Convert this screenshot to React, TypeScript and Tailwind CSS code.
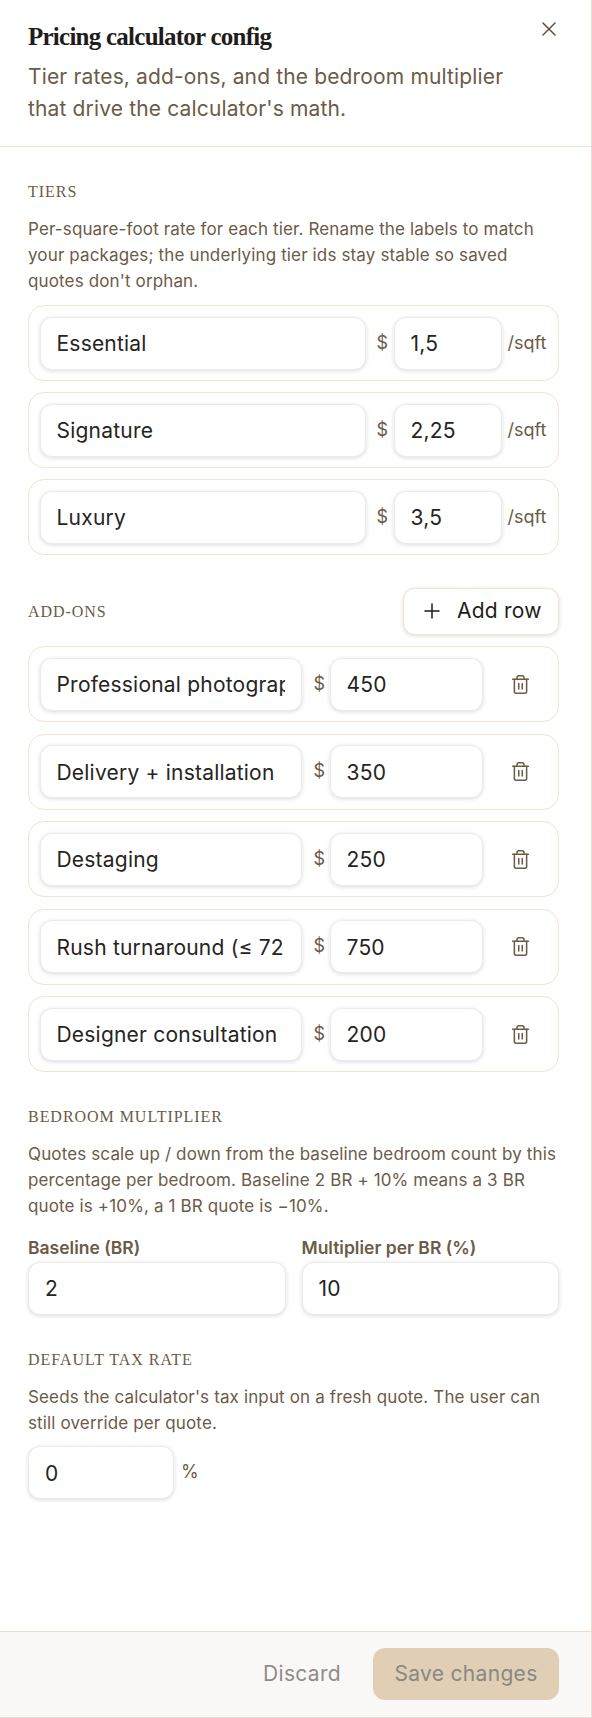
import { Plus, Trash2, X } from 'lucide-react';

const inputClass =
  'h-[53px] min-w-0 rounded-[12px] border border-[#ecebe9] bg-white px-4 pt-[1px] text-[21px] tracking-[0.01em] text-[#262422] shadow-[0_1px_4px_rgba(0,0,0,0.14)] outline-none';

const headingClass =
  "font-['Liberation_Serif',serif] text-[16px] font-normal uppercase tracking-[0.06em] text-[#6b5b47]";

const descClass = 'mt-[12px] text-[17px] leading-[26px] tracking-[0.008em] text-[#6b5b47]';

const labelClass =
  'flex flex-col text-[17.5px] font-semibold leading-[24px] text-[#6b5b47]';

const tiers = [
  { label: 'Essential', rate: '1,5' },
  { label: 'Signature', rate: '2,25' },
  { label: 'Luxury', rate: '3,5' },
];

const addons = [
  { label: 'Professional photographer', price: '450' },
  { label: 'Delivery + installation', price: '350' },
  { label: 'Destaging', price: '250' },
  { label: 'Rush turnaround (≤ 72hr)', price: '750' },
  { label: 'Designer consultation', price: '200' },
];

function TierRow({ label, rate }: { label: string; rate: string }) {
  return (
    <div className="flex items-center rounded-[16px] border border-[#f0e4d2] p-[10.5px]">
      <input readOnly value={label} className={`${inputClass} w-[326px]`} />
      <span className="ml-[11px] w-[17px] text-[18px] text-[#6b5b47] -translate-y-[1.5px]">$</span>
      <input readOnly value={rate} className={`${inputClass} w-[108px]`} />
      <span className="ml-[6px] text-[18px] text-[#6b5b47] -translate-y-[1.5px]">/sqft</span>
    </div>
  );
}

function AddonRow({ label, price }: { label: string; price: string }) {
  return (
    <div className="flex items-center rounded-[16px] border border-[#f0e4d2] p-[10.5px]">
      <input readOnly value={label} className={`${inputClass} w-[262px]`} />
      <span className="ml-[12px] w-[16px] text-[18px] text-[#6b5b47] -translate-y-[1.5px]">$</span>
      <input readOnly value={price} className={`${inputClass} w-[153px]`} />
      <button className="ml-[27px] flex items-center justify-center text-[#6b5b47]">
        <Trash2 size={21} strokeWidth={1.75} />
      </button>
    </div>
  );
}

export default function App() {
  return (
    <div className="flex h-screen w-[592px] flex-col border-r border-[#e8dfd2] bg-white font-['Inter',sans-serif]">
      {/* Header */}
      <header className="relative h-[147px] shrink-0 border-b border-[#ece4d9] pl-[28px] pr-[80px] pt-[20px]">
        <h2 className="font-['Liberation_Serif',serif] text-[25px] font-bold leading-[34px] tracking-[-0.03em] text-[#1f1d1a]">
          Pricing calculator config
        </h2>
        <p className="mt-[7px] text-[21px] leading-[32px] tracking-[0.007em] text-[#6b5b47]">
          Tier rates, add-ons, and the bedroom multiplier that drive the calculator's math.
        </p>
        <button className="absolute right-[30px] top-[17px] text-[#5c4f3f]">
          <X size={24} strokeWidth={1.5} />
        </button>
      </header>

      {/* Body */}
      <main className="min-h-0 flex-1 pl-[28px] pr-[32px] pt-[33px]">
        <section>
          <h3 className={headingClass}>Tiers</h3>
          <p className={descClass}>
            Per-square-foot rate for each tier. Rename the labels to match your packages; the
            underlying tier ids stay stable so saved quotes don't orphan.
          </p>
          <div className="mt-[11px] flex flex-col gap-[11px]">
            {tiers.map((t) => (
              <TierRow key={t.label} {...t} />
            ))}
          </div>
        </section>

        <section className="mt-[32.5px]">
          <div className="flex items-center justify-between">
            <h3 className={`${headingClass} translate-y-[1px]`}>Add-ons</h3>
            <button className="flex h-[47px] w-[156px] items-center gap-[13px] rounded-[12px] border border-[#f0e4d2] bg-white pl-[16px] text-[21px] tracking-[0.01em] text-[#1f1d1a] shadow-[0_1px_4px_rgba(0,0,0,0.14)]">
              <Plus size={24} strokeWidth={1.5} />
              Add row
            </button>
          </div>
          <div className="mt-[11.5px] flex flex-col gap-[11.5px]">
            {addons.map((a) => (
              <AddonRow key={a.label} {...a} />
            ))}
          </div>
        </section>

        <section className="mt-[32.5px]">
          <h3 className={headingClass}>Bedroom multiplier</h3>
          <p className={descClass}>
            Quotes scale up / down from the baseline bedroom count by this percentage per bedroom.
            Baseline 2 BR + 10% means a 3 BR quote is +10%, a 1 BR quote is −10%.
          </p>
          <div className="mt-[17px] grid grid-cols-2 gap-4">
            <label className={labelClass}>
              Baseline (BR)
              <input readOnly value="2" className={`${inputClass} mt-[2px] w-full font-normal`} />
            </label>
            <label className={labelClass}>
              Multiplier per BR (%)
              <input readOnly value="10" className={`${inputClass} mt-[2px] w-full font-normal`} />
            </label>
          </div>
        </section>

        <section className="mt-[33px]">
          <h3 className={headingClass}>Default tax rate</h3>
          <p className={descClass}>
            Seeds the calculator's tax input on a fresh quote. The user can still override per
            quote.
          </p>
          <div className="mt-[10.5px] flex items-center gap-[7px]">
            <input readOnly value="0" className={`${inputClass} w-[146px]`} />
            <span className="text-[18px] text-[#6b5b47] -translate-y-[1.5px]">%</span>
          </div>
        </section>
      </main>

      {/* Footer */}
      <footer className="flex h-[87px] shrink-0 items-center justify-end gap-[32px] border-y border-[#e8dfd2] bg-[#faf8f6] pb-[1px] pr-[32px]">
        <button className="text-[21px] tracking-[0.015em] text-[#8f8c88]">Discard</button>
        <button className="h-[52px] w-[186px] rounded-[12px] bg-[#e0cfb4] text-[21px] tracking-[0.015em] text-[#8a8782]">
          Save changes
        </button>
      </footer>
    </div>
  );
}
